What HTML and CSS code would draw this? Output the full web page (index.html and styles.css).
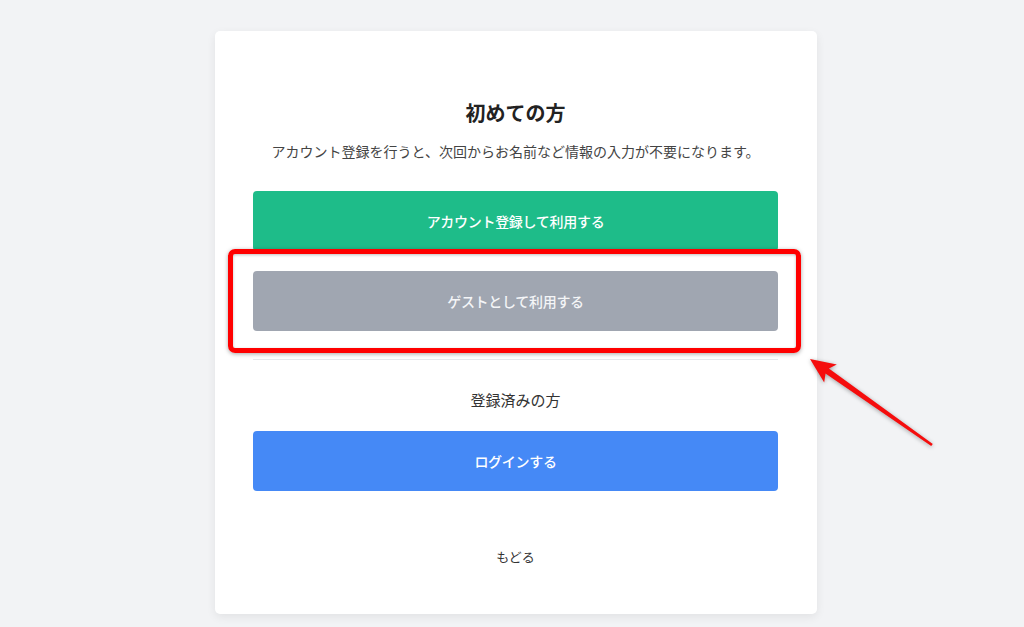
FILE: index.html
```html
<!DOCTYPE html>
<html lang="ja">
<head>
<meta charset="utf-8">
<title>初めての方</title>
<link rel="stylesheet" href="styles.css">
</head>
<body>
<div class="page">
  <main class="card">
    <h1 class="title">初めての方</h1>
    <p class="lead">アカウント登録を行うと、次回からお名前など情報の入力が不要になります。</p>
    <div class="actions">
      <a class="btn btn-green" href="#">アカウント登録して利用する</a>
      <a class="btn btn-gray" href="#">ゲストとして利用する</a>
    </div>
    <hr class="divider">
    <p class="sub">登録済みの方</p>
    <a class="btn btn-blue" href="#">ログインする</a>
    <a class="back" href="#">もどる</a>
  </main>
</div>
<div class="highlight"></div>
<svg class="arrow" width="1024" height="627" viewBox="0 0 1024 627" aria-hidden="true">
  <polygon points="810,359 836.8,364.4 828.9,368.6 932.8,443.9 931.2,446.1 825.5,373.6 824.2,382.4" fill="#f50d0d"/>
</svg>
</body>
</html>
```
FILE: styles.css
```css
html, body {
  margin: 0;
  padding: 0;
}
body {
  background: #f2f3f5;
  font-family: "Noto Sans CJK JP", "Noto Sans", sans-serif;
  color: #333;
  height: 627px;
  overflow: hidden;
}
.page {
  display: flex;
  justify-content: center;
  padding: 31px 0 0 8px;
}
.card {
  width: 602px;
  box-sizing: border-box;
  background: #fff;
  border-radius: 5px;
  box-shadow: 0 3px 10px rgba(0, 0, 0, 0.07);
  padding: 68px 39px 47px 38px;
  display: flex;
  flex-direction: column;
  align-items: stretch;
  text-align: center;
}
.title {
  margin: 0;
  font-size: 20px;
  line-height: 28px;
  font-weight: 700;
  color: #222;
}
.lead {
  margin: 14px 0 0;
  font-size: 14px;
  line-height: 20px;
  color: #444;
}
.actions {
  margin-top: 30px;
  display: flex;
  flex-direction: column;
  gap: 20px;
}
.btn {
  display: flex;
  align-items: center;
  justify-content: center;
  height: 60px;
  border-radius: 4px;
  color: #fff;
  font-size: 14px;
  font-weight: 500;
  text-decoration: none;
  letter-spacing: -0.3px;
}
.btn-green { background: #1ebc89; }
.btn-gray { background: #a0a6b1; color: #f4f5f7; }
.btn-blue { background: #4589f6; }
.divider {
  margin: 28px 0 0;
  border: 0;
  border-top: 1px solid #e6e8ec;
  height: 0;
}
.sub {
  margin: 28px 0 0;
  font-size: 15px;
  line-height: 24px;
  color: #333;
}
.btn-blue { margin-top: 19px; }
.back {
  margin-top: 56px;
  font-size: 13px;
  line-height: 20px;
  color: #333;
  text-decoration: none;
  align-self: center;
}
.highlight {
  position: absolute;
  left: 228px;
  top: 249px;
  width: 573px;
  height: 104px;
  box-sizing: border-box;
  border: 5px solid #ff0000;
  border-radius: 7px;
  box-shadow: 0 1px 4px rgba(0, 0, 0, 0.35), inset 0 1px 3px rgba(0, 0, 0, 0.25);
  pointer-events: none;
}
.arrow {
  position: absolute;
  left: 0;
  top: 0;
  pointer-events: none;
  filter: drop-shadow(0 1px 2px rgba(0, 0, 0, 0.35));
}
```
